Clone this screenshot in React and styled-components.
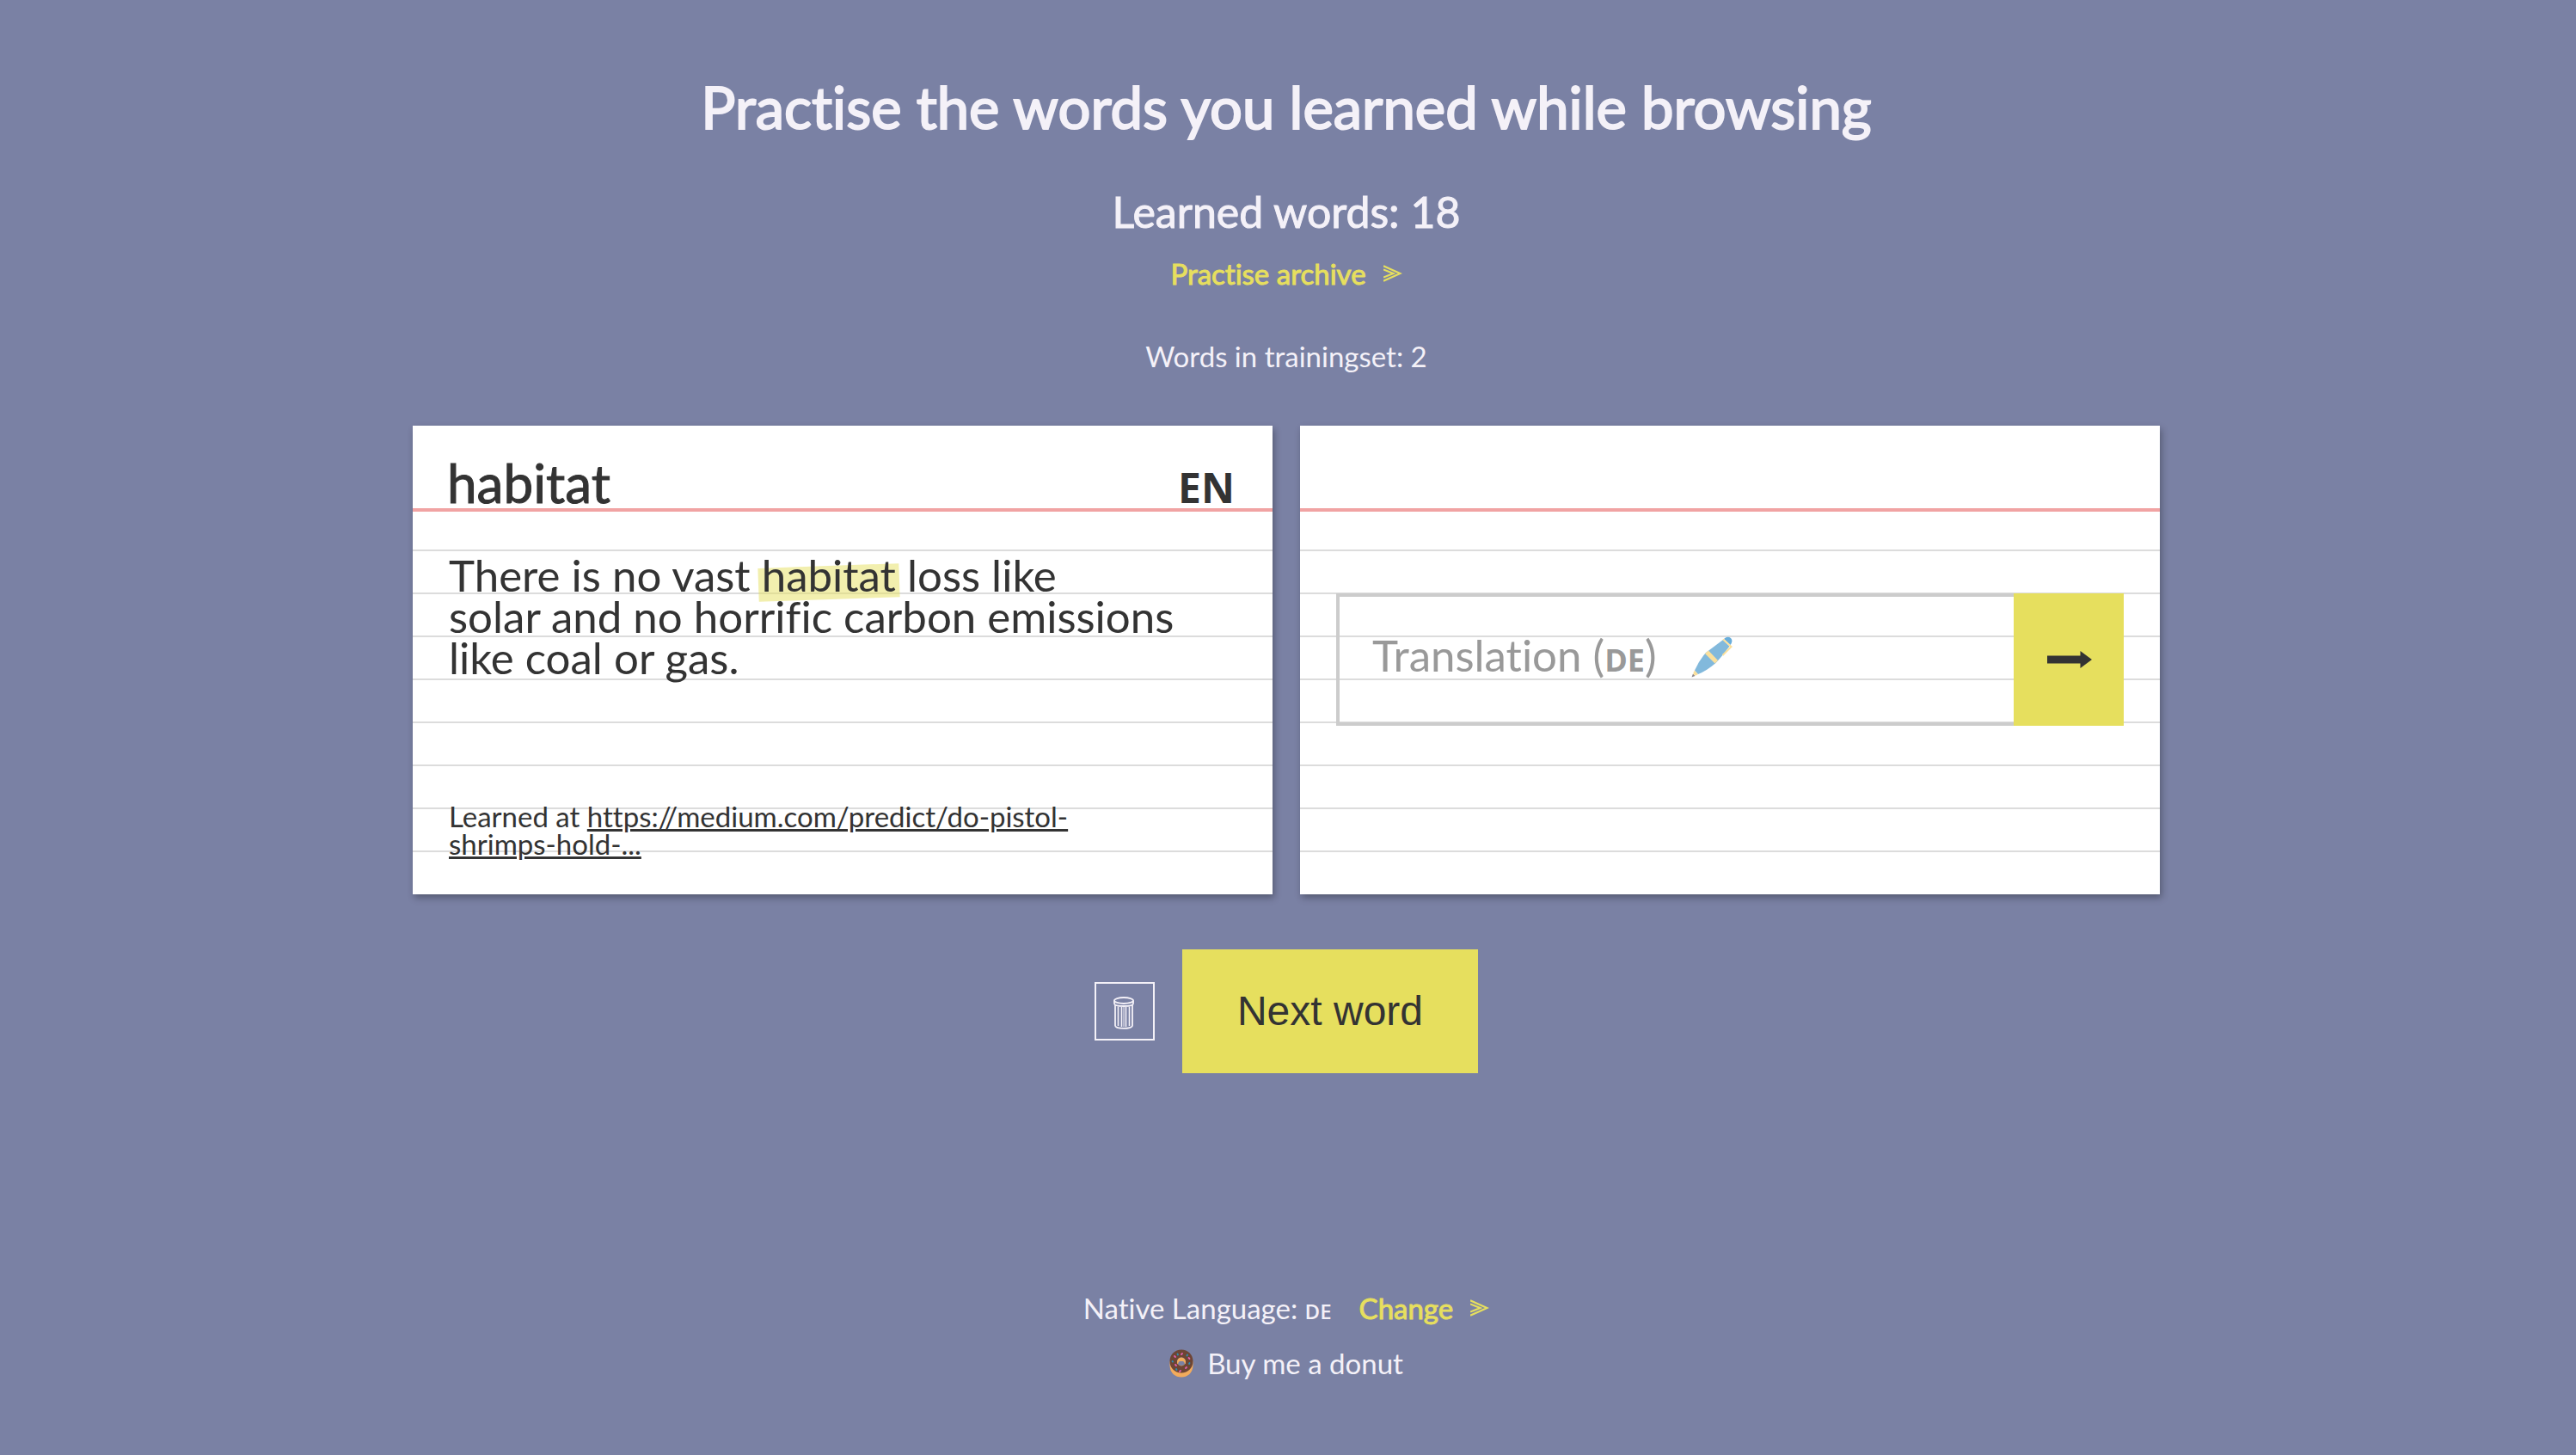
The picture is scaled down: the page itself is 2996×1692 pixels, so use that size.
import React, { useState } from "react";
import styled, { createGlobalStyle } from "styled-components";

const c = {
  page: "#7a81a4",
  light: "#f4f1f8",
  yellow: "#e6df5e",
  ink: "#333333",
  rule: "#dcdcdc",
  margin: "#f1a3a3",
  field: "#cccccc",
  hint: "#999999",
};

const GlobalStyle = createGlobalStyle`
  *, *::before, *::after { box-sizing: border-box; }
  body {
    margin: 0;
    background: ${c.page};
    color: ${c.light};
    font-family: Lato, "Open Sans", sans-serif;
    font-size: 33px;
    line-height: 40px;
    font-variant-ligatures: none;
  }
  h1, h2, p { margin: 0; font-weight: 400; }
  button { border: 0; margin: 0; padding: 0; cursor: pointer; }
  svg { display: block; flex: none; }
`;

const Page = styled.main`
  display: flex;
  flex-direction: column;
  align-items: center;
  min-height: 100vh;
  padding: 84px 4px 0 0;
`;

const Title = styled.h1`
  font-size: 67px;
  line-height: 80px;
  -webkit-text-stroke: 2px ${c.light};
`;

const Subtitle = styled.h2`
  margin-top: 52px;
  font-size: 50px;
  line-height: 60px;
  -webkit-text-stroke: 1px ${c.light};
`;

const ActionLink = styled.a`
  display: inline-flex;
  align-items: center;
  gap: 20px;
  color: ${c.yellow};
  text-decoration: none;
  -webkit-text-stroke: 1px ${c.yellow};
`;

const Archive = styled.p`
  margin-top: 22px;
`;

const Count = styled.p`
  margin-top: 56px;
`;

const Cards = styled.div`
  display: grid;
  grid-template-columns: 1fr 1fr;
  gap: 32px;
  width: 100%;
  max-width: 2032px;
  margin-top: 61px;
`;

const Card = styled.section`
  display: flex;
  flex-direction: column;
  min-height: 545px;
  background: #fff;
  color: ${c.ink};
  box-shadow: 2px 4px 8px rgba(0, 0, 0, 0.3);
`;

const CardHeader = styled.header`
  display: flex;
  justify-content: space-between;
  align-items: baseline;
  height: 100px;
  padding: 38px 44px 0 40px;
  border-bottom: 4px solid ${c.margin};
`;

const Word = styled.h2`
  font-size: 62px;
  line-height: 56px;
  -webkit-text-stroke: 1px ${c.ink};
`;

const Code = styled.span`
  font-family: "Open Sans", sans-serif;
  font-weight: ${(p) => p.$weight || 700};
  font-size: ${(p) => p.$size}px;
  line-height: 1;
  -webkit-text-stroke: 0;
`;

const CardBody = styled.div`
  flex: 1;
  display: flex;
  flex-direction: column;
  justify-content: space-between;
  padding: ${(p) => p.$top}px 42px 38px;
  border-bottom: 5px solid #fff;
  background: linear-gradient(transparent 48px, ${c.rule} 48px) 0 -4px / 100% 50px padding-box;
`;

const Sentence = styled.p`
  max-width: 860px;
  font-size: 51px;
  line-height: 48px;
  isolation: isolate;
`;

const Highlight = styled.mark`
  position: relative;
  background: none;
  color: inherit;

  &::before {
    content: "";
    position: absolute;
    inset: 20px -4px 2px;
    z-index: -1;
    background: rgba(230, 223, 94, 0.5);
    transform: rotate(-2deg);
  }
`;

const Source = styled.p`
  max-width: 800px;
  line-height: 32px;

  a { color: inherit; }
`;

const Answer = styled.form`
  position: relative;
  display: flex;
  height: 154px;
`;

const AnswerInput = styled.input`
  flex: 1;
  min-width: 0;
  padding: 0 38px;
  border: 4px solid ${c.field};
  border-right: 0;
  border-radius: 0;
  outline: 0;
  background: transparent;
  color: ${c.ink};
  font: 51px Lato, sans-serif;
`;

const AnswerLabel = styled.label`
  position: absolute;
  top: 0;
  bottom: 0;
  left: 42px;
  display: ${(p) => (p.$hidden ? "none" : "flex")};
  align-items: center;
  gap: 40px;
  padding-bottom: 6px;
  color: ${c.hint};
  font-size: 51px;
  pointer-events: none;
`;

const Submit = styled.button`
  display: grid;
  place-items: center;
  width: 128px;
  padding-left: 2px;
  background: ${c.yellow};
  color: ${c.ink};
`;

const Actions = styled.div`
  display: flex;
  align-items: center;
  gap: 32px;
  margin-top: 64px;
`;

const DeleteButton = styled.button`
  display: grid;
  place-items: center;
  width: 70px;
  height: 68px;
  padding: 4px 2px 0 0;
  border: 2px solid ${c.light};
  background: none;
  color: ${c.light};
`;

const NextButton = styled.button`
  height: 144px;
  padding: 0 64px 2px;
  background: ${c.yellow};
  color: ${c.ink};
  font: 48px "Liberation Sans", Arial, sans-serif;
`;

const Footer = styled.footer`
  display: flex;
  flex-direction: column;
  align-items: center;
  gap: 24px;
  margin-top: 253px;
`;

const Language = styled.p`
  display: flex;
  align-items: baseline;
  gap: 32px;
`;

const Donate = styled.a`
  display: flex;
  align-items: center;
  gap: 16px;
  color: inherit;
  text-decoration: none;
`;

const Chevrons = () => (
  <svg width="22" height="20" viewBox="0 0 22 20" fill="none" stroke="currentColor" strokeWidth="2.2" aria-hidden="true">
    <path d="M0 1.2 L19.5 10 L0 18.8" />
    <path d="M0 5.4 L11.5 10 L0 14.6" />
  </svg>
);

const Arrow = () => (
  <svg width="52" height="20" viewBox="0 0 52 20" fill="currentColor" aria-hidden="true">
    <path d="M0 5.5 H38.5 V0 L52 10 L38.5 20 V14.5 H0 Z" />
  </svg>
);

const Trash = () => (
  <svg width="24" height="38" viewBox="0 0 24 38" fill="none" stroke="currentColor" strokeWidth="1.8" aria-hidden="true">
    <ellipse cx="12" cy="4.5" rx="11" ry="3.5" />
    <path d="M1 4.5 V8 C1 12 23 12 23 8 V4.5" />
    <path d="M2 10 V33.5 C2 38 22 38 22 33.5 V10" />
    <path d="M5.5 11.5 V34 M9.5 12 V35 M14.5 12 V35 M18.5 11.5 V34" strokeWidth="1.6" />
    <path d="M12 12 V35" strokeWidth="1" />
  </svg>
);

const Pen = () => (
  <svg width="48" height="48" viewBox="0 0 48 48" aria-hidden="true">
    <path d="M0.5 47.5 L2 43.5 L4.5 46 Z" fill="#8c8588" />
    <path d="M2.5 42 L4 39.5 L8 44 L5.5 45.5 Q2 45.5 2.5 42Z" fill="#fbe09c" />
    <path d="M4 39.5 Q9 28 17 19 L37 4 L44.5 11.5 Q36 23 28.5 31 Q18 40 8 44 Z" fill="#82b9dc" />
    <path d="M16 20 L20 16.5 L31 28 L27.5 31.5 Z" fill="#fbe09c" />
    <path d="M38 3 Q42 -1 46 2 Q49 5 45.5 10 Z" fill="#6aaedb" />
    <path d="M37 3.5 L46.5 12 L36.5 22" fill="none" stroke="#fbe09c" strokeWidth="2" />
  </svg>
);

const Donut = () => (
  <svg width="28" height="33" viewBox="0 0 28 33" aria-hidden="true">
    <path
      fill="#f2ab5c"
      fillRule="evenodd"
      d="M0.5 14 V19 C1 28 7 32.5 14 32.5 S27 28 27.5 19 V14 Z M9.5 16 a4.5 3 0 0 0 9 0 a4.5 3 0 0 0 -9 0Z"
    />
    <path
      fill="#6d4534"
      fillRule="evenodd"
      d="M14 0.5 C6.5 0.5 0.5 6 0.5 14 S6.5 27.5 14 27.5 S27.5 22 27.5 14 S21.5 0.5 14 0.5Z M9 14.5 a5 5 0 0 1 10 0 a5 5 0 0 1 -10 0Z"
    />
    <path fill="#f2ab5c" d="M9 15 a5 5.5 0 0 1 10 0 q0 1.5 -1 2.5 q-0.5 -4 -4 -4 t-4 4 q-1 -1 -1 -2.5Z" />
    <g strokeWidth="1.8" strokeLinecap="round">
      <path stroke="#e05fae" d="M6 8 l1 1 M15 5 l-1 1 M22.5 10 l1 1 M7 18 l1 1 M20 21 l-1 1 M13 25 l-1 1" />
      <path stroke="#2b8fb5" d="M9.5 5.5 l0.5 1 M21 6.5 l-0.5 1 M3.5 14 l0.5 0.5 M23.5 16 l-0.5 1 M8 23 l0.5 1" />
    </g>
  </svg>
);

export default function App() {
  const [answer, setAnswer] = useState("");

  return (
    <>
      <GlobalStyle />
      <Page>
        <Title>Practise the words you learned while browsing</Title>
        <Subtitle>Learned words: 18</Subtitle>
        <Archive>
          <ActionLink href="#archive">
            Practise archive
            <Chevrons />
          </ActionLink>
        </Archive>
        <Count>Words in trainingset: 2</Count>

        <Cards>
          <Card>
            <CardHeader>
              <Word>habitat</Word>
              <Code $size={48}>EN</Code>
            </CardHeader>
            <CardBody $top={50}>
              <Sentence>
                There is no vast <Highlight>habitat</Highlight> loss like
                <br />
                solar and no horrific carbon emissions like coal or gas.
              </Sentence>
              <Source>
                Learned at <a href="#source">https://medium.com/predict/do-pistol-shrimps-hold-...</a>
              </Source>
            </CardBody>
          </Card>

          <Card>
            <CardHeader />
            <CardBody $top={95}>
              <Answer onSubmit={(e) => e.preventDefault()}>
                <AnswerInput id="answer" type="text" value={answer} onChange={(e) => setAnswer(e.target.value)} />
                <AnswerLabel htmlFor="answer" $hidden={answer !== ""}>
                  <span>
                    Translation (<Code $size={36}>DE</Code>)
                  </span>
                  <Pen />
                </AnswerLabel>
                <Submit type="submit" aria-label="Check translation">
                  <Arrow />
                </Submit>
              </Answer>
            </CardBody>
          </Card>
        </Cards>

        <Actions>
          <DeleteButton type="button" aria-label="Delete word">
            <Trash />
          </DeleteButton>
          <NextButton type="button">Next word</NextButton>
        </Actions>

        <Footer>
          <Language>
            <span>
              Native Language: <Code $size={24} $weight={600}>DE</Code>
            </span>
            <ActionLink href="#language">
              Change
              <Chevrons />
            </ActionLink>
          </Language>
          <Donate href="#donate">
            <Donut />
            Buy me a donut
          </Donate>
        </Footer>
      </Page>
    </>
  );
}
